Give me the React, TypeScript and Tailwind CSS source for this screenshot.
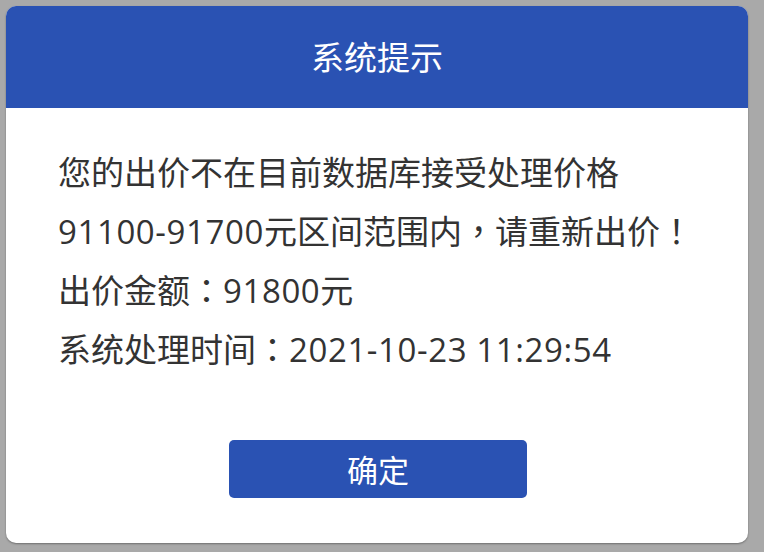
type Seg = { t: string; kind?: 'num' | 'punct' };

const lines: Seg[][] = [
  [{ t: '您的出价不在目前数据库接受处理价格' }],
  [
    { t: '91100-91700', kind: 'num' },
    { t: '元区间范围内' },
    { t: '，', kind: 'punct' },
    { t: '请重新出价' },
    { t: '！', kind: 'punct' },
  ],
  [{ t: '出价金额' }, { t: '：', kind: 'punct' }, { t: '91800', kind: 'num' }, { t: '元' }],
  [{ t: '系统处理时间' }, { t: '：', kind: 'punct' }, { t: '2021-10-23 11:29:54', kind: 'num' }],
];

function Segment({ seg }: { seg: Seg }) {
  if (seg.kind === 'num') {
    return (
      <span className="tracking-[0.6px]" style={{ fontFamily: '"Open Sans", "Noto Sans", sans-serif' }}>
        {seg.t}
      </span>
    );
  }
  if (seg.kind === 'punct') {
    // TC variant centres full-width punctuation like the original
    return <span style={{ fontFamily: '"Noto Sans CJK TC", sans-serif' }}>{seg.t}</span>;
  }
  return <span>{seg.t}</span>;
}

export default function App() {
  return (
    <div
      className="w-[764px] h-[552px] overflow-hidden bg-[#a9a9a9] pt-[6px] pl-[6px]"
      style={{ fontFamily: '"Noto Sans CJK SC", "Noto Sans", sans-serif' }}
    >
      {/* Dialog */}
      <div className="w-[742px] h-[537px] bg-white rounded-[10px] overflow-hidden flex flex-col shadow-[0_1px_2px_rgba(0,0,0,0.35)]">
        <div className="h-[102px] shrink-0 bg-[#2a52b3] flex items-center justify-center text-white text-[33px]">
          系统提示
        </div>
        <div className="pt-[34px] pl-[52px] text-[#333333] text-[33px] leading-[59px]">
          {lines.map((line, i) => (
            <div key={i} className="h-[59px] whitespace-nowrap">
              {line.map((seg, j) => (
                <Segment key={j} seg={seg} />
              ))}
            </div>
          ))}
        </div>
        <div className="mt-[62px] flex justify-center">
          <button className="w-[298px] h-[58px] rounded-[5px] bg-[#2a52b3] text-white text-[31px] ml-[2px]">
            确定
          </button>
        </div>
      </div>

      {/* page text behind the overlay, mostly hidden */}
      <div className="pl-[70px] mt-[3px] text-[#c0474f] text-[30px] leading-[40px] whitespace-nowrap">
        出价时间2021-10-23 11:29:54
      </div>
    </div>
  );
}
